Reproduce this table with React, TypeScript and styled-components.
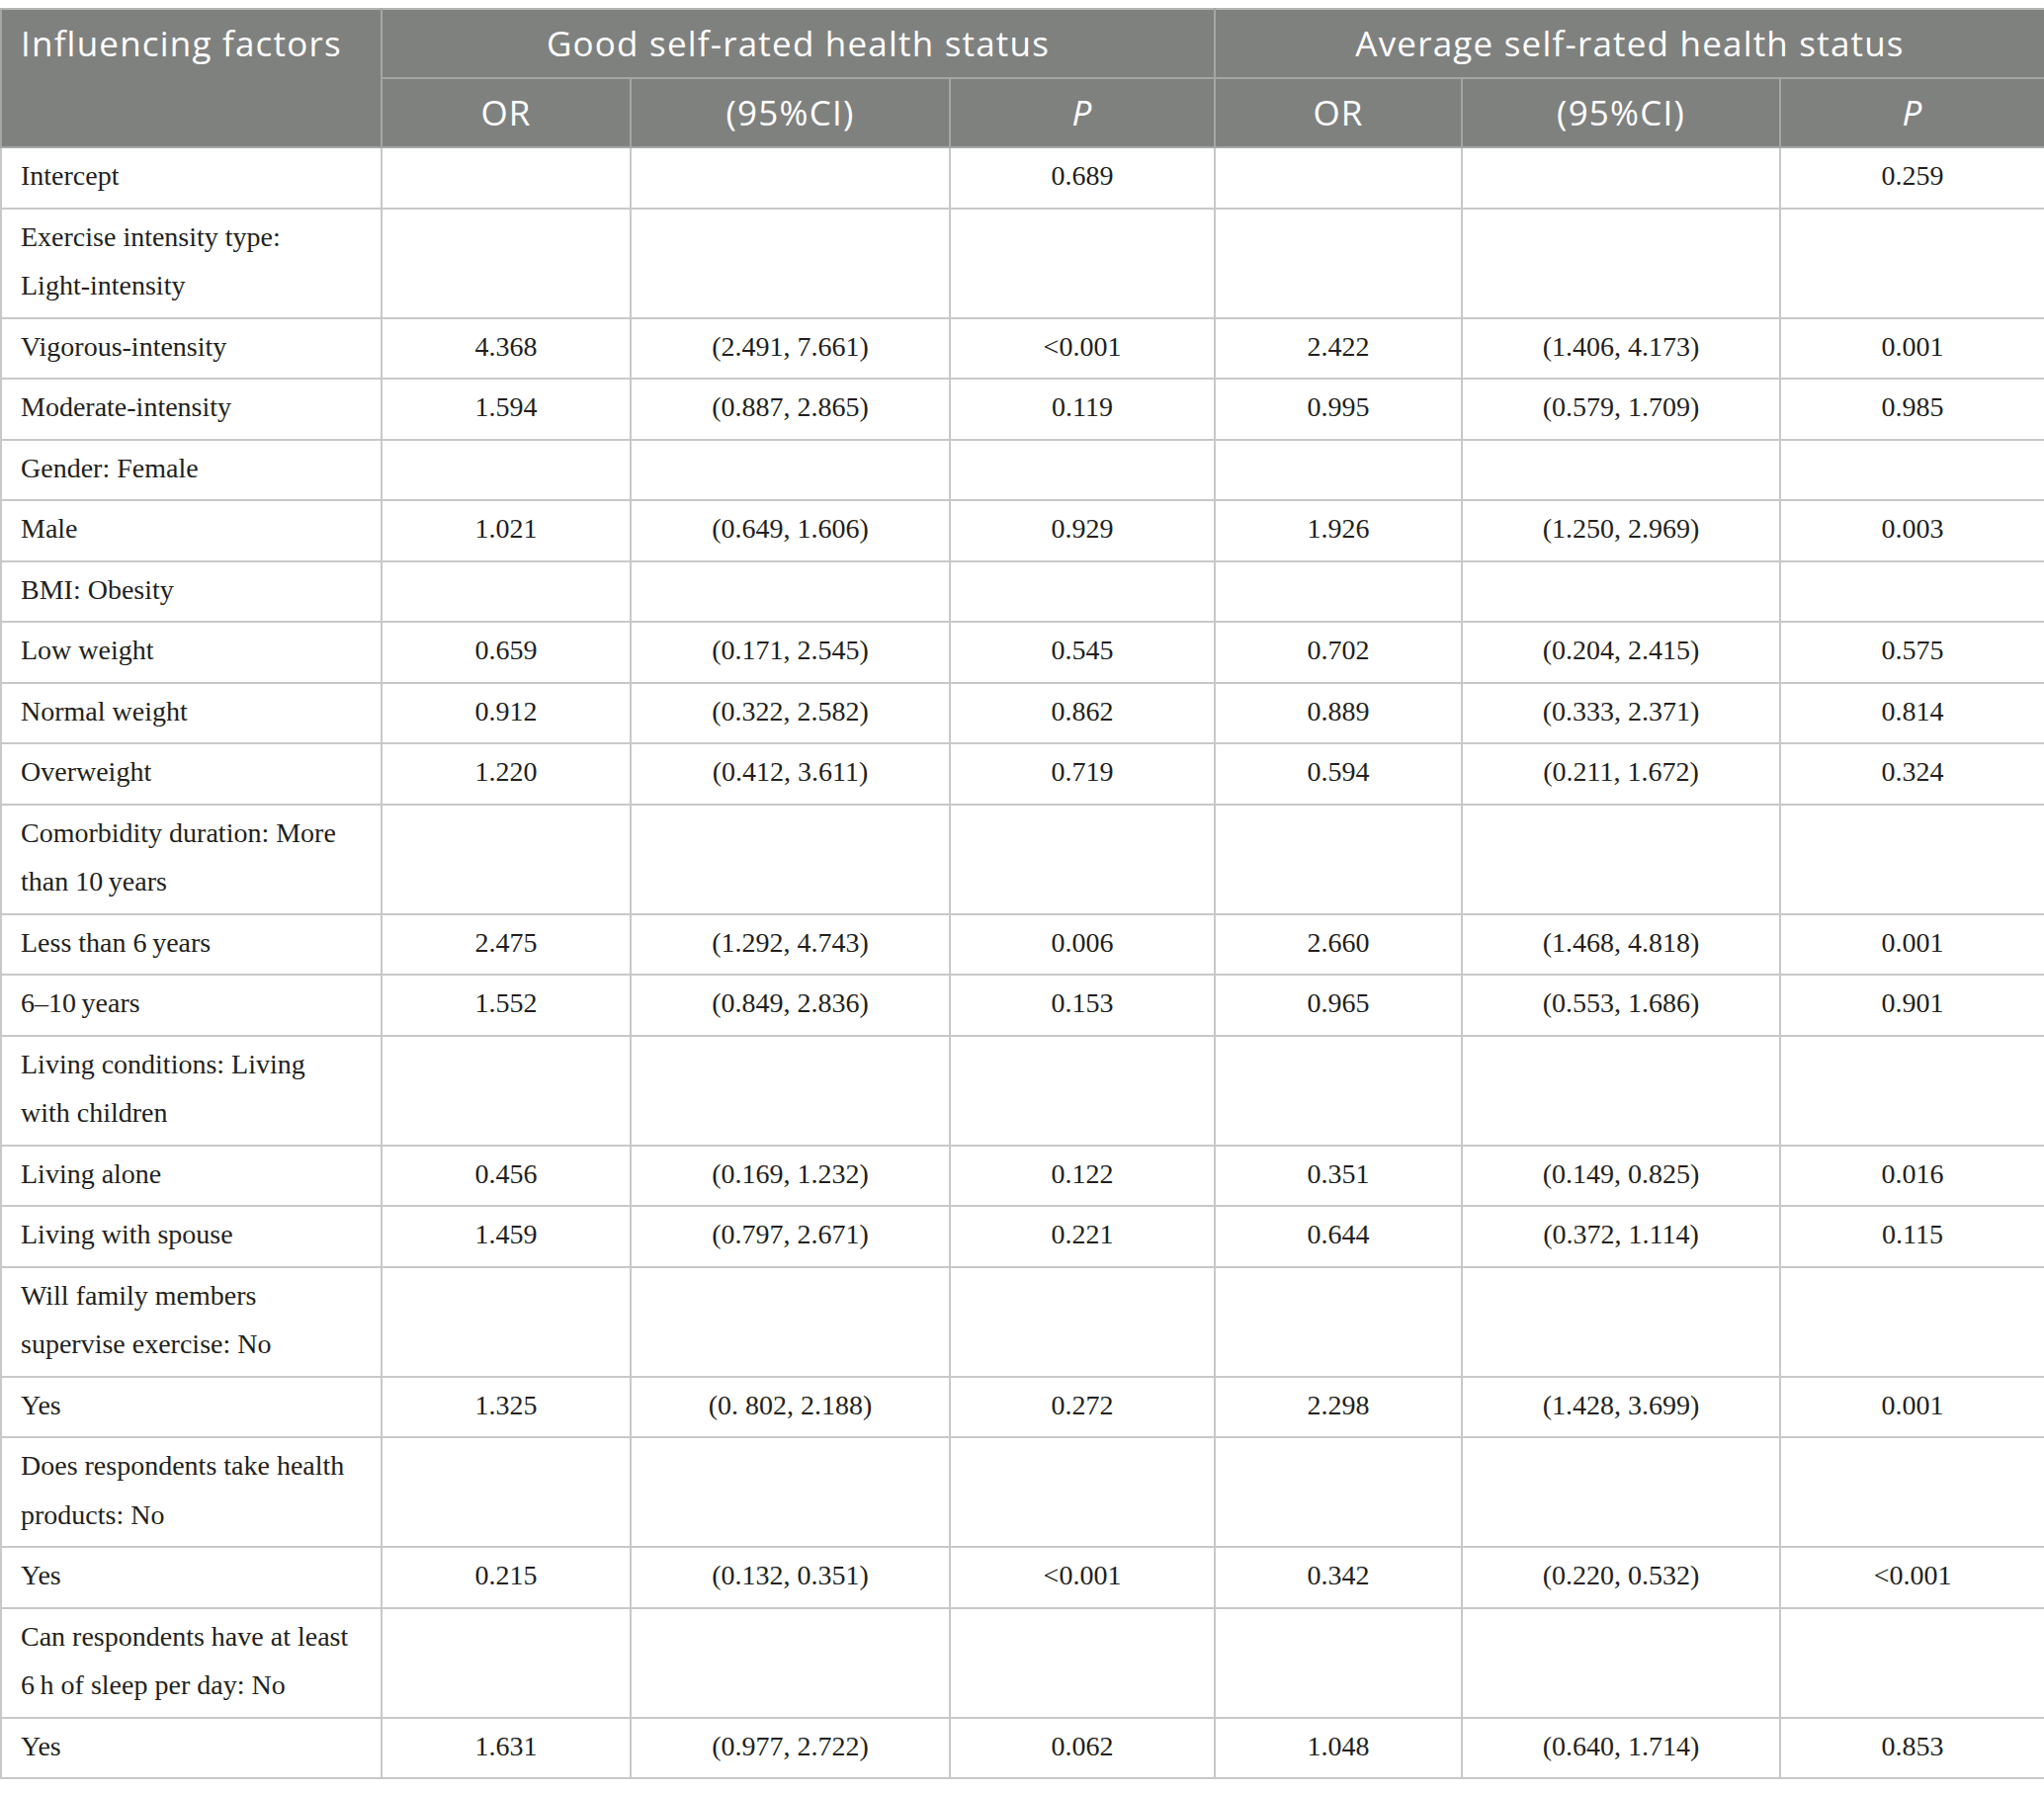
import React from 'react';
import styled, { createGlobalStyle } from 'styled-components';

const GlobalStyle = createGlobalStyle`
  html,
  body {
    margin: 0;
    padding: 0;
    background: #fff;
  }
`;

const Page = styled.div`
  padding-top: 8px;
  width: 2068px;
`;

const Table = styled.table`
  width: 2068px;
  table-layout: fixed;
  border-collapse: collapse;
  font-family: 'Liberation Serif', 'Times New Roman', serif;
`;

const HeadCell = styled.th<{ $align?: string; $italic?: boolean }>`
  background-color: #7f817f;
  color: #fff;
  font-family: 'Open Sans', 'Noto Sans', sans-serif;
  font-weight: 400;
  font-size: 35px;
  letter-spacing: 1.2px;
  line-height: 50px;
  padding: 9px 19px;
  border: 2px solid #a4a6a5;
  border-top-color: #b5b5b5;
  text-align: ${(p) => p.$align || 'center'};
  vertical-align: ${(p) => (p.$align === 'left' ? 'top' : 'middle')};
  font-style: ${(p) => (p.$italic ? 'italic' : 'normal')};
  white-space: nowrap;
`;

const Cell = styled.td<{ $label?: boolean }>`
  color: #231f20;
  font-size: 28px;
  line-height: 49.5px;
  padding: ${(p) => (p.$label ? '3px 26px 7px 19px' : '3px 8px 7px')};
  border: 2px solid #c8c8c8;
  text-align: ${(p) => (p.$label ? 'left' : 'center')};
  vertical-align: middle;
`;

type Row = [string, string, string, string, string, string, string];

const rows: Row[] = [
  ['Intercept', '', '', '0.689', '', '', '0.259'],
  ['Exercise intensity type: Light-intensity', '', '', '', '', '', ''],
  ['Vigorous-intensity', '4.368', '(2.491, 7.661)', '<0.001', '2.422', '(1.406, 4.173)', '0.001'],
  ['Moderate-intensity', '1.594', '(0.887, 2.865)', '0.119', '0.995', '(0.579, 1.709)', '0.985'],
  ['Gender: Female', '', '', '', '', '', ''],
  ['Male', '1.021', '(0.649, 1.606)', '0.929', '1.926', '(1.250, 2.969)', '0.003'],
  ['BMI: Obesity', '', '', '', '', '', ''],
  ['Low weight', '0.659', '(0.171, 2.545)', '0.545', '0.702', '(0.204, 2.415)', '0.575'],
  ['Normal weight', '0.912', '(0.322, 2.582)', '0.862', '0.889', '(0.333, 2.371)', '0.814'],
  ['Overweight', '1.220', '(0.412, 3.611)', '0.719', '0.594', '(0.211, 1.672)', '0.324'],
  ['Comorbidity duration: More than 10\u2009years', '', '', '', '', '', ''],
  ['Less than 6\u2009years', '2.475', '(1.292, 4.743)', '0.006', '2.660', '(1.468, 4.818)', '0.001'],
  ['6\u201310\u2009years', '1.552', '(0.849, 2.836)', '0.153', '0.965', '(0.553, 1.686)', '0.901'],
  ['Living conditions: Living with children', '', '', '', '', '', ''],
  ['Living alone', '0.456', '(0.169, 1.232)', '0.122', '0.351', '(0.149, 0.825)', '0.016'],
  ['Living with spouse', '1.459', '(0.797, 2.671)', '0.221', '0.644', '(0.372, 1.114)', '0.115'],
  ['Will family members supervise exercise: No', '', '', '', '', '', ''],
  ['Yes', '1.325', '(0. 802, 2.188)', '0.272', '2.298', '(1.428, 3.699)', '0.001'],
  ['Does respondents take health products: No', '', '', '', '', '', ''],
  ['Yes', '0.215', '(0.132, 0.351)', '<0.001', '0.342', '(0.220, 0.532)', '<0.001'],
  ['Can respondents have at least 6\u2009h of sleep per day: No', '', '', '', '', '', ''],
  ['Yes', '1.631', '(0.977, 2.722)', '0.062', '1.048', '(0.640, 1.714)', '0.853'],
];

const widths = [385, 252, 323, 268, 250, 322, 268];

const App = () => (
  <Page>
    <GlobalStyle />
    <Table>
      <colgroup>
        {widths.map((w, i) => (
          <col key={i} style={{ width: w }} />
        ))}
      </colgroup>
      <thead>
        <tr>
          <HeadCell rowSpan={2} $align="left">
            Influencing factors
          </HeadCell>
          <HeadCell colSpan={3}>Good self-rated health status</HeadCell>
          <HeadCell colSpan={3}>Average self-rated health status</HeadCell>
        </tr>
        <tr>
          <HeadCell>OR</HeadCell>
          <HeadCell>(95%CI)</HeadCell>
          <HeadCell $italic>P</HeadCell>
          <HeadCell>OR</HeadCell>
          <HeadCell>(95%CI)</HeadCell>
          <HeadCell $italic>P</HeadCell>
        </tr>
      </thead>
      <tbody>
        {rows.map((row, i) => (
          <tr key={i}>
            {row.map((value, j) => (
              <Cell key={j} $label={j === 0}>
                {value}
              </Cell>
            ))}
          </tr>
        ))}
      </tbody>
    </Table>
  </Page>
);

export default App;
